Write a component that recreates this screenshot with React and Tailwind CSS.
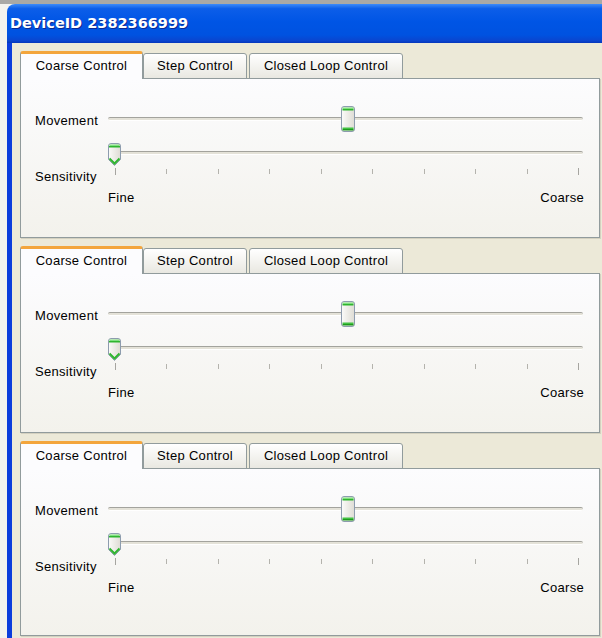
import React from "react";

const TICKS = Array.from({ length: 10 }, (_, i) => i);

function VerticalThumb() {
  return (
    <svg width="14" height="26" viewBox="0 0 14 26">
      <defs>
        <linearGradient id="vbody" x1="0" x2="1" y1="0" y2="0">
          <stop offset="0" stopColor="#fbfbf9" />
          <stop offset="1" stopColor="#dedcd4" />
        </linearGradient>
      </defs>
      <rect x="0.5" y="0.5" width="13" height="25" rx="2.5" fill="url(#vbody)" stroke="#8d9cae" />
      <rect x="1.5" y="1.5" width="11" height="1.5" fill="#7fe07f" />
      <rect x="1.5" y="3" width="11" height="1.5" fill="#2fb52f" />
      <rect x="1.5" y="21.5" width="11" height="1.5" fill="#41c241" />
      <rect x="1.5" y="23" width="11" height="1.5" fill="#1d9a1d" />
    </svg>
  );
}

function PointerThumb() {
  return (
    <svg width="15" height="24" viewBox="0 0 15 24">
      <defs>
        <linearGradient id="pbody" x1="0" x2="1" y1="0" y2="0">
          <stop offset="0" stopColor="#fbfbf9" />
          <stop offset="1" stopColor="#dedcd4" />
        </linearGradient>
      </defs>
      <path
        d="M1.5 3 Q1.5 0.5 4 0.5 H11 Q13.5 0.5 13.5 3 V16.5 L7.5 22.5 L1.5 16.5 Z"
        fill="url(#pbody)"
        stroke="#8d9cae"
      />
      <rect x="2.5" y="1.5" width="10" height="1.5" fill="#7fe07f" />
      <rect x="2" y="3" width="11" height="1.5" fill="#2fb52f" />
      <polyline points="2.5,15.5 7.5,20.5 12.5,15.5" fill="none" stroke="#2fb52f" strokeWidth="2" />
    </svg>
  );
}

function Track() {
  return (
    <div className="h-[4px] w-full rounded-full border-t border-t-[#a3a39d] border-b border-b-white bg-[#e4e2d8]" />
  );
}

function Tabs() {
  return (
    <div className="relative z-10 -mb-px flex h-[28px] items-end">
      <div className="flex h-[28px] w-[123px] items-center justify-center rounded-t-[3px] border-x border-x-[#919b9c] border-t-[3px] border-t-[#f3a53c] bg-[#fcfcfe] pb-[2px]">
        Coarse Control
      </div>
      <div className="flex h-[26px] w-[104px] items-center justify-center rounded-t-[3px] border border-[#919b9c] bg-gradient-to-b from-white to-[#e9e8e1]">
        Step Control
      </div>
      <div className="ml-[2px] flex h-[26px] w-[154px] items-center justify-center rounded-t-[3px] border border-[#919b9c] bg-gradient-to-b from-white to-[#e9e8e1]">
        Closed Loop Control
      </div>
    </div>
  );
}

function PanelBody() {
  return (
    <div className="flex flex-col pl-[14px] pr-[16px] pt-[27px]">
      {/* Movement slider */}
      <div className="flex h-[26px] items-center">
        <div className="w-[73px] pt-[4px]">Movement</div>
        <div className="relative flex h-[26px] flex-1 items-center">
          <Track />
          <div className="absolute left-[233px] top-0">
            <VerticalThumb />
          </div>
        </div>
      </div>

      {/* Sensitivity slider */}
      <div className="mt-[11px] flex">
        <div className="w-[73px] pt-[26px] leading-[15px]">Sensitivity</div>
        <div className="flex flex-1 flex-col">
          <div className="relative flex h-[20px] items-center">
            <Track />
            <div className="absolute left-[-1px] top-0">
              <PointerThumb />
            </div>
          </div>
          <div className="ml-[7px] mr-[4px] mt-[5px] flex h-[7px] items-center justify-between">
            {TICKS.map((i) => (
              <div
                key={i}
                className={
                  i === 0 || i === 9
                    ? "h-[7px] w-px bg-[#a6a5a0]"
                    : "h-[5px] w-px bg-[#b4b3ad]"
                }
              />
            ))}
          </div>
          <div className="mt-[15px] flex justify-between leading-[15px]">
            <span>Fine</span>
            <span className="mr-[-1px]">Coarse</span>
          </div>
        </div>
      </div>
    </div>
  );
}

function Section({ tall }) {
  return (
    <div className="flex flex-col">
      <Tabs />
      <div
        className={
          tall
            ? "h-[168px] w-[580px] border border-[#919b9c] bg-gradient-to-b from-[#fcfcfe] to-[#f3f2ec] shadow-[1px_1px_0_#d4d1c0]"
            : "h-[160px] w-[580px] border border-[#919b9c] bg-gradient-to-b from-[#fcfcfe] to-[#f3f2ec] shadow-[1px_1px_0_#d4d1c0]"
        }
      >
        <PanelBody />
      </div>
    </div>
  );
}

export default function App() {
  return (
    <div className="h-[638px] w-[602px] overflow-hidden bg-[#f3f3ee] text-[13px] tracking-[0.3px] text-black [font-family:'Liberation_Sans',Arial,sans-serif]">
      <div className="h-[4px] bg-[#a9a9a6]" />
      <div className="ml-[7px] flex flex-col">
        <div className="flex h-[39px] items-center rounded-tl-[8px] bg-[linear-gradient(to_bottom,#3d8bf9_0%,#0c5ee9_12%,#0055e5_45%,#0052e0_80%,#0a45cf_94%,#0537bb_100%)] pl-[3px]">
          <span className="text-[14.5px] font-bold tracking-normal text-white [font-family:'DejaVu_Sans',sans-serif] [text-shadow:1px_1px_0_#0d2a90]">
            DeviceID 2382366999
          </span>
        </div>
        <div className="flex h-[595px] flex-col gap-[8px] border-l-[5px] border-l-[#0b3ddc] bg-[#ece9d8] pl-[8px] pt-[8px]">
          <Section />
          <Section />
          <Section tall />
        </div>
      </div>
    </div>
  );
}
